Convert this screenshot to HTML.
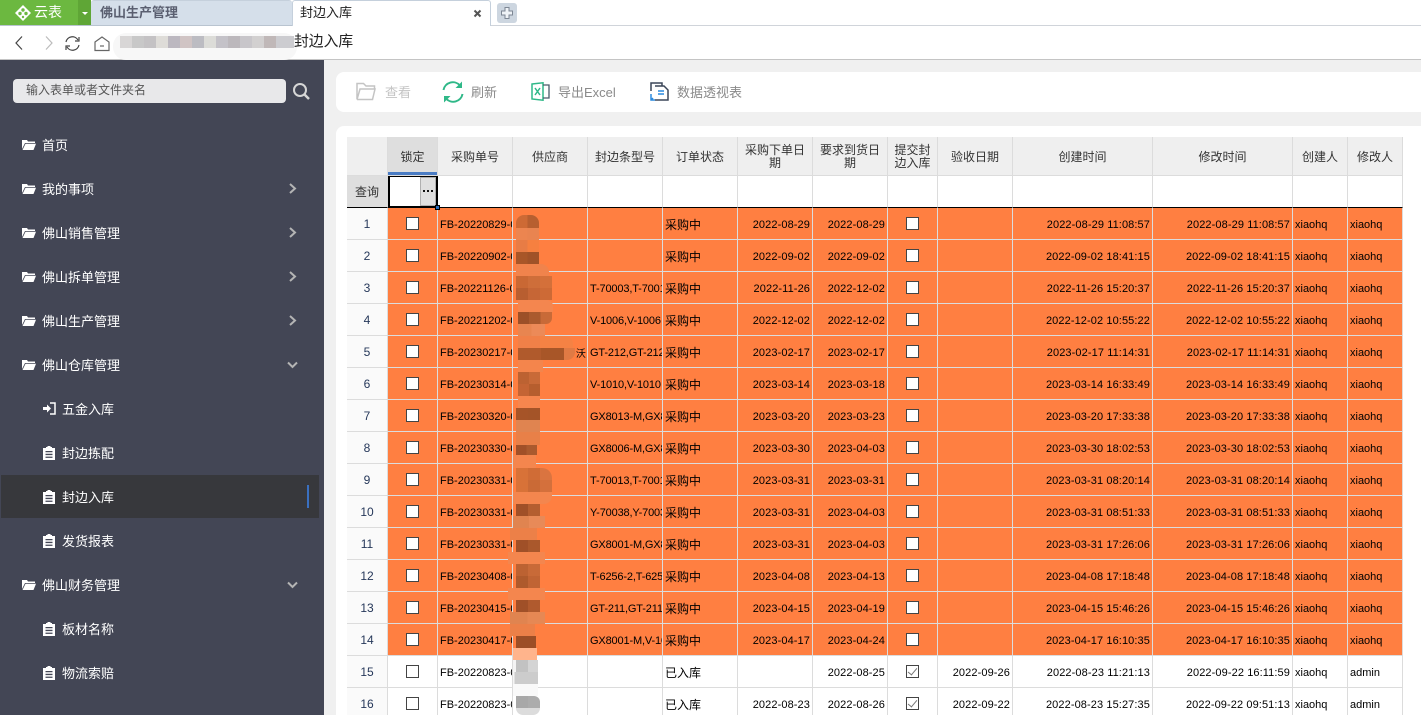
<!DOCTYPE html>
<html lang="zh">
<head>
<meta charset="utf-8">
<style>
*{box-sizing:border-box}
html,body{margin:0;padding:0;width:1421px;height:715px;overflow:hidden;background:#f0f0f0;font-family:"Liberation Sans","Noto Sans CJK SC",sans-serif}
#root{position:absolute;left:0;top:0;width:1421px;height:715px;overflow:hidden;background:#f0f0f0}
.a{position:absolute}
.n{white-space:nowrap}
#side{left:0;top:60px;width:324px;height:655px;background:#434655}
.m{position:absolute;left:42px;color:#fff;font-size:13px;line-height:18px;white-space:nowrap;margin-top:1px}
.s{position:absolute;left:62px;color:#fff;font-size:13px;line-height:18px;white-space:nowrap;margin-top:1px}
.fi{position:absolute;left:22px;width:14px;height:11px}
.ci{position:absolute;left:43px;width:12px;height:14px;margin-top:1px}
.ar{position:absolute;left:288px;width:9px;height:11px}
.t{color:#8a8a8a;font-size:13px;line-height:18px;position:absolute;white-space:nowrap;margin-top:1px}
table{position:absolute;left:347px;top:137px;width:1056px;border-collapse:separate;border-spacing:0;table-layout:fixed;font-size:11px;color:#000}
td,th{border-right:1px solid #dcdcdc;border-bottom:1px solid #dcdcdc;padding:2px 2px 0;overflow:hidden;white-space:nowrap;font-weight:normal}
tr{height:32px}
tr.u{height:39px}
th{height:39px;background:#efefef;color:#333;font-size:12px;text-align:center;line-height:13px;white-space:normal;padding:2px 7px 0}
th.x{padding:2px 0 0;white-space:nowrap}
tr.f td{height:32px;background:#fff;border-bottom:1px solid #000;padding:0}
tr.o td{background:#ff7f41;height:32px}
tr.w td{background:#fff;height:32px}
td.h{background:#fafafa!important;text-align:center;color:#26385a;font-size:12px;padding:0}
td.c{text-align:center;padding:2px 0 0}
td.r{text-align:right;letter-spacing:.1px}
td.z{font-size:12px}
td.g{letter-spacing:-.15px}
i.b{display:inline-block;width:13px;height:13px;border:1px solid #444;background:#fff;vertical-align:middle;margin-top:-2px;position:relative}
i.k:after{content:"";position:absolute;left:3px;top:0;width:4px;height:8px;border:solid #777;border-width:0 1.5px 1.5px 0;transform:rotate(40deg)}
.p{position:absolute}
</style>
</head>
<body>
<div id="root">
<!-- tab bar -->
<div class="a" style="left:0;top:0;width:1421px;height:26px;background:#fff"></div>
<div class="a" style="left:0;top:0;width:78px;height:26px;background:#6cb840"></div>
<div class="a" style="left:78px;top:0;width:13px;height:26px;background:#5fa636"></div>
<div class="a" style="left:82px;top:12px;width:0;height:0;border:3px solid transparent;border-top:3px solid #fff;border-bottom:0"></div>
<svg class="a" style="left:14px;top:4px" width="18" height="18" viewBox="0 0 18 18"><path d="M9 1L17 9L9 17L1 9Z" fill="#fff"/><circle cx="9" cy="6" r="1.7" fill="#6cb840"/><circle cx="6" cy="9.5" r="1.7" fill="#6cb840"/><circle cx="12" cy="9.5" r="1.7" fill="#6cb840"/><circle cx="9" cy="13" r="1.2" fill="#6cb840"/></svg>
<div class="a n" style="left:34px;top:3px;color:#fff;font-size:14px;line-height:19px">云表</div>
<div class="a" style="left:91px;top:0;width:201px;height:26px;background:#d5dfea;border-top:1px solid #c5d0dc;border-bottom:1px solid #b9c4d0;border-radius:3px 3px 0 0"></div>
<div class="a n" style="left:100px;top:3px;color:#5a5f70;font-size:13px;font-weight:bold;line-height:19px">佛山生产管理</div>
<div class="a" style="left:292px;top:0;width:199px;height:26px;background:#fff;border:1px solid #c5d0dc;border-bottom:0;border-radius:3px 3px 0 0"></div>
<div class="a n" style="left:300px;top:3px;color:#222;font-size:13px;line-height:19px">封边入库</div>
<svg class="a" style="left:473px;top:9px" width="9" height="9" viewBox="0 0 9 9"><path d="M1.5 1.5L7.5 7.5M7.5 1.5L1.5 7.5" stroke="#555" stroke-width="2"/></svg>
<div class="a" style="left:497px;top:3px;width:20px;height:20px;background:#cdd6e0;border-radius:3px"></div>
<svg class="a" style="left:501px;top:7px" width="12" height="12" viewBox="0 0 12 12"><path d="M4 .5H8V4H11.500V8H8V11.500H4V8H.5V4H4Z" fill="#eef2f6" stroke="#7d8794"/></svg>
<div class="a" style="left:491px;top:25px;width:930px;height:1px;background:#d0d4da"></div>
<div class="a" style="left:0;top:25px;width:292px;height:1px;background:#b9c4d0"></div>
<!-- address bar -->
<div class="a" style="left:0;top:26px;width:1421px;height:34px;background:#fff;border-bottom:1px solid #c4c4c4"></div>
<svg class="a" style="left:13px;top:34px" width="12" height="18" viewBox="0 0 12 18"><path d="M9 2.500L3 9L9 15.500" fill="none" stroke="#444" stroke-width="1.200"/></svg>
<svg class="a" style="left:43px;top:34px" width="12" height="18" viewBox="0 0 12 18"><path d="M3 2.500L9 9L3 15.500" fill="none" stroke="#bbb" stroke-width="1.200"/></svg>
<svg class="a" style="left:64px;top:35px" width="17" height="17" viewBox="0 0 17 17"><path d="M2 7A6.500 6.500 0 0 1 14 5M15 10A6.500 6.500 0 0 1 3 12" fill="none" stroke="#444" stroke-width="1.200"/><path d="M15 2V6H11M2 15V11H6" fill="none" stroke="#444" stroke-width="1.200"/></svg>
<svg class="a" style="left:94px;top:35px" width="17" height="17" viewBox="0 0 17 17"><path d="M1 7L8 2L15 7V15.500H1Z" fill="none" stroke="#666" stroke-width="1.200"/><path d="M6 11H10" stroke="#666" stroke-width="1.200"/></svg>
<div class="a" style="left:113px;top:33px;width:184px;height:27px;background:#f7f7f7;border-radius:13px"></div>
<div class="a" style="left:120px;top:36px;width:174px;height:12px;background:linear-gradient(90deg,#d8d6d6 0 12px,#c8c8c8 12px 24px,#c4c2c4 24px 36px,#dedcd8 36px 48px,#bcb8c0 48px 60px,#d0c4c4 60px 72px,#bcbcc2 72px 84px,#dcdcd8 84px 96px,#c4c2c8 96px 108px,#bcb8bc 108px 120px,#c8c6ca 120px 132px,#d2d0d0 132px 144px,#c0b8b8 144px 156px,#ccccd0 156px 174px)"></div>
<div class="a n" style="left:294px;top:32px;color:#222;font-size:14.800px;line-height:21px">封边入库</div>
<!-- sidebar -->
<div class="a" id="side"></div>
<div class="a" style="left:13px;top:79px;width:273px;height:24px;background:#e8e8ea;border-radius:4px"></div>
<div class="a n" style="left:26px;top:81px;color:#555;font-size:12px;line-height:18px">输入表单或者文件夹名</div>
<svg class="a" style="left:292px;top:82px" width="19" height="19" viewBox="0 0 19 19"><circle cx="8" cy="8" r="6" fill="none" stroke="#d6d6d6" stroke-width="2"/><path d="M12.500 12.500L17 17" stroke="#d6d6d6" stroke-width="2.500"/></svg>
<div class="a" style="left:1px;top:475px;width:318px;height:43px;background:#37383c"></div>
<div class="a" style="left:307px;top:485px;width:2px;height:23px;background:#3a70c0"></div>
<svg width="0" height="0" style="position:absolute"><defs>
<g id="fo"><path d="M0 1H5L6 2.500H13V4H3L0 10Z" fill="#fff"/><path d="M3.500 4.800H14L11.500 11H0.500Z" fill="#fff"/></g>
<g id="cl"><path d="M0 2H3V1H4.500V0H7.500V1H9V2H12V14H0Z" fill="#fff"/><path d="M2.500 5H9.500V6.300H2.500ZM2.500 7.800H9.500V9.100H2.500ZM2.500 10.600H9.500V11.900H2.500Z" fill="#434655"/></g>
<g id="ra"><path d="M2 1L7 5.500L2 10" fill="none" stroke="#b4b4b4" stroke-width="2"/></g>
</defs></svg>
<svg class="fi" style="top:139px" viewBox="0 0 14 11"><use href="#fo"/></svg><div class="m" style="top:136px">首页</div>
<svg class="fi" style="top:183px" viewBox="0 0 14 11"><use href="#fo"/></svg><div class="m" style="top:180px">我的事项</div><svg class="ar" style="top:183px" viewBox="0 0 9 11"><use href="#ra"/></svg>
<svg class="fi" style="top:227px" viewBox="0 0 14 11"><use href="#fo"/></svg><div class="m" style="top:224px">佛山销售管理</div><svg class="ar" style="top:227px" viewBox="0 0 9 11"><use href="#ra"/></svg>
<svg class="fi" style="top:271px" viewBox="0 0 14 11"><use href="#fo"/></svg><div class="m" style="top:268px">佛山拆单管理</div><svg class="ar" style="top:271px" viewBox="0 0 9 11"><use href="#ra"/></svg>
<svg class="fi" style="top:315px" viewBox="0 0 14 11"><use href="#fo"/></svg><div class="m" style="top:312px">佛山生产管理</div><svg class="ar" style="top:315px" viewBox="0 0 9 11"><use href="#ra"/></svg>
<svg class="fi" style="top:359px" viewBox="0 0 14 11"><use href="#fo"/></svg><div class="m" style="top:356px">佛山仓库管理</div>
<svg class="a" style="left:287px;top:361px" width="11" height="8" viewBox="0 0 11 8"><path d="M1 1.500L5.500 6L10 1.500" fill="none" stroke="#b4b4b4" stroke-width="2"/></svg>
<svg class="a" style="left:43px;top:402px" width="13" height="13" viewBox="0 0 13 13"><path d="M0 5H4V2.500L8 6.500L4 10.500V8H0Z" fill="#fff"/><path d="M7 1H12V12H7" fill="none" stroke="#fff" stroke-width="1.500"/></svg><div class="s" style="top:400px">五金入库</div>
<svg class="ci" style="top:445px" viewBox="0 0 12 14"><use href="#cl"/></svg><div class="s" style="top:444px">封边拣配</div>
<svg class="ci" style="top:489px" viewBox="0 0 12 14"><use href="#cl"/></svg><div class="s" style="top:488px">封边入库</div>
<svg class="ci" style="top:533px" viewBox="0 0 12 14"><use href="#cl"/></svg><div class="s" style="top:532px">发货报表</div>
<svg class="fi" style="top:579px" viewBox="0 0 14 11"><use href="#fo"/></svg><div class="m" style="top:576px">佛山财务管理</div>
<svg class="a" style="left:287px;top:581px" width="11" height="8" viewBox="0 0 11 8"><path d="M1 1.500L5.500 6L10 1.500" fill="none" stroke="#b4b4b4" stroke-width="2"/></svg>
<svg class="ci" style="top:621px" viewBox="0 0 12 14"><use href="#cl"/></svg><div class="s" style="top:620px">板材名称</div>
<svg class="ci" style="top:665px" viewBox="0 0 12 14"><use href="#cl"/></svg><div class="s" style="top:664px">物流索赔</div>
<!-- toolbar -->
<div class="a" style="left:336px;top:72px;width:1085px;height:40px;background:#fff;border-radius:8px 0 0 8px"></div>
<svg class="a" style="left:356px;top:82px" width="20" height="19" viewBox="0 0 20 19"><path d="M1 17.500V1.500H7.500L10 4H18.500V7M1 17.500H16.500L19 7H4L1 17.500" fill="none" stroke="#c4c4c4" stroke-width="1.500"/></svg>
<div class="t" style="left:385px;top:83px;color:#c4c4c4">查看</div>
<svg class="a" style="left:442px;top:81px" width="22" height="22" viewBox="0 0 22 22"><path d="M1.500 9A9.500 9.500 0 0 1 18 4.500M20.500 13A9.500 9.500 0 0 1 4 17.500" fill="none" stroke="#2fb888" stroke-width="2"/><path d="M20 0.500V7H13.500ZM2 21.500V15H8.500Z" fill="#2fb888"/></svg>
<div class="t" style="left:471px;top:83px">刷新</div>
<svg class="a" style="left:531px;top:82px" width="19" height="19" viewBox="0 0 19 19"><path d="M1 2L12 .8V18.200L1 17Z" fill="#fff" stroke="#2fb888" stroke-width="1.500"/><path d="M12 3H18V16H12" fill="none" stroke="#4a5a6a" stroke-width="1.300"/><path d="M4 6L9 13M9 6L4 13" stroke="#2fb888" stroke-width="1.500"/></svg>
<div class="t" style="left:558px;top:83px">导出Excel</div>
<svg class="a" style="left:650px;top:82px" width="19" height="20" viewBox="0 0 19 20"><path d="M1 9V1H12V4" fill="none" stroke="#3b4658" stroke-width="1.500"/><path d="M5 4H14L18 8V18H5" fill="#fff" stroke="#3b4658" stroke-width="1.500"/><path d="M8 9H14M8 12H14" stroke="#2a8adf" stroke-width="1.500"/><path d="M1 12V18H5M1 18L3 16" fill="none" stroke="#2a8adf" stroke-width="1.500"/></svg>
<div class="t" style="left:677px;top:83px">数据透视表</div>
<!-- table card -->
<div class="a" style="left:336px;top:126px;width:1085px;height:589px;background:#fff;border-radius:8px 0 0 0"></div>
<table>
<colgroup><col style="width:41px"><col style="width:50px"><col style="width:75px"><col style="width:75px"><col style="width:75px"><col style="width:75px"><col style="width:75px"><col style="width:75px"><col style="width:50px"><col style="width:75px"><col style="width:140px"><col style="width:140px"><col style="width:55px"><col style="width:55px"></colgroup>
<tr class="u"><th></th><th style="background:#dedede">锁定</th><th>采购单号</th><th>供应商</th><th>封边条型号</th><th>订单状态</th><th>采购下单日期</th><th>要求到货日期</th><th class="x">提交封<br>边入库</th><th>验收日期</th><th>创建时间</th><th>修改时间</th><th class="x">创建人</th><th class="x">修改人</th></tr>
<tr class="f"><td class="c" style="background:#dedede;font-size:12px;color:#333;padding:0">查询</td><td></td><td></td><td></td><td></td><td></td><td></td><td></td><td></td><td></td><td></td><td></td><td></td><td></td></tr>
<tr class="o"><td class="h">1</td><td class="c"><i class="b"></i></td><td>FB-20220829-0001</td><td></td><td class="g"></td><td class="z">采购中</td><td class="r">2022-08-29</td><td class="r">2022-08-29</td><td class="c"><i class="b"></i></td><td></td><td class="r">2022-08-29 11:08:57</td><td class="r">2022-08-29 11:08:57</td><td>xiaohq</td><td>xiaohq</td></tr>
<tr class="o"><td class="h">2</td><td class="c"><i class="b"></i></td><td>FB-20220902-0001</td><td></td><td class="g"></td><td class="z">采购中</td><td class="r">2022-09-02</td><td class="r">2022-09-02</td><td class="c"><i class="b"></i></td><td></td><td class="r">2022-09-02 18:41:15</td><td class="r">2022-09-02 18:41:15</td><td>xiaohq</td><td>xiaohq</td></tr>
<tr class="o"><td class="h">3</td><td class="c"><i class="b"></i></td><td>FB-20221126-0001</td><td></td><td class="g">T-70003,T-70013</td><td class="z">采购中</td><td class="r">2022-11-26</td><td class="r">2022-12-02</td><td class="c"><i class="b"></i></td><td></td><td class="r">2022-11-26 15:20:37</td><td class="r">2022-11-26 15:20:37</td><td>xiaohq</td><td>xiaohq</td></tr>
<tr class="o"><td class="h">4</td><td class="c"><i class="b"></i></td><td>FB-20221202-0001</td><td></td><td class="g">V-1006,V-1006</td><td class="z">采购中</td><td class="r">2022-12-02</td><td class="r">2022-12-02</td><td class="c"><i class="b"></i></td><td></td><td class="r">2022-12-02 10:55:22</td><td class="r">2022-12-02 10:55:22</td><td>xiaohq</td><td>xiaohq</td></tr>
<tr class="o"><td class="h">5</td><td class="c"><i class="b"></i></td><td>FB-20230217-0001</td><td class="r" style="padding-right:1px;font-size:10px">沃</td><td class="g">GT-212,GT-212</td><td class="z">采购中</td><td class="r">2023-02-17</td><td class="r">2023-02-17</td><td class="c"><i class="b"></i></td><td></td><td class="r">2023-02-17 11:14:31</td><td class="r">2023-02-17 11:14:31</td><td>xiaohq</td><td>xiaohq</td></tr>
<tr class="o"><td class="h">6</td><td class="c"><i class="b"></i></td><td>FB-20230314-0001</td><td></td><td class="g">V-1010,V-1010</td><td class="z">采购中</td><td class="r">2023-03-14</td><td class="r">2023-03-18</td><td class="c"><i class="b"></i></td><td></td><td class="r">2023-03-14 16:33:49</td><td class="r">2023-03-14 16:33:49</td><td>xiaohq</td><td>xiaohq</td></tr>
<tr class="o"><td class="h">7</td><td class="c"><i class="b"></i></td><td>FB-20230320-0001</td><td></td><td class="g">GX8013-M,GX8013</td><td class="z">采购中</td><td class="r">2023-03-20</td><td class="r">2023-03-23</td><td class="c"><i class="b"></i></td><td></td><td class="r">2023-03-20 17:33:38</td><td class="r">2023-03-20 17:33:38</td><td>xiaohq</td><td>xiaohq</td></tr>
<tr class="o"><td class="h">8</td><td class="c"><i class="b"></i></td><td>FB-20230330-0001</td><td></td><td class="g">GX8006-M,GX8006</td><td class="z">采购中</td><td class="r">2023-03-30</td><td class="r">2023-04-03</td><td class="c"><i class="b"></i></td><td></td><td class="r">2023-03-30 18:02:53</td><td class="r">2023-03-30 18:02:53</td><td>xiaohq</td><td>xiaohq</td></tr>
<tr class="o"><td class="h">9</td><td class="c"><i class="b"></i></td><td>FB-20230331-0001</td><td></td><td class="g">T-70013,T-70013</td><td class="z">采购中</td><td class="r">2023-03-31</td><td class="r">2023-03-31</td><td class="c"><i class="b"></i></td><td></td><td class="r">2023-03-31 08:20:14</td><td class="r">2023-03-31 08:20:14</td><td>xiaohq</td><td>xiaohq</td></tr>
<tr class="o"><td class="h">10</td><td class="c"><i class="b"></i></td><td>FB-20230331-0002</td><td></td><td class="g">Y-70038,Y-70038</td><td class="z">采购中</td><td class="r">2023-03-31</td><td class="r">2023-04-03</td><td class="c"><i class="b"></i></td><td></td><td class="r">2023-03-31 08:51:33</td><td class="r">2023-03-31 08:51:33</td><td>xiaohq</td><td>xiaohq</td></tr>
<tr class="o"><td class="h">11</td><td class="c"><i class="b"></i></td><td>FB-20230331-0003</td><td></td><td class="g">GX8001-M,GX8001</td><td class="z">采购中</td><td class="r">2023-03-31</td><td class="r">2023-04-03</td><td class="c"><i class="b"></i></td><td></td><td class="r">2023-03-31 17:26:06</td><td class="r">2023-03-31 17:26:06</td><td>xiaohq</td><td>xiaohq</td></tr>
<tr class="o"><td class="h">12</td><td class="c"><i class="b"></i></td><td>FB-20230408-0001</td><td></td><td class="g">T-6256-2,T-6256</td><td class="z">采购中</td><td class="r">2023-04-08</td><td class="r">2023-04-13</td><td class="c"><i class="b"></i></td><td></td><td class="r">2023-04-08 17:18:48</td><td class="r">2023-04-08 17:18:48</td><td>xiaohq</td><td>xiaohq</td></tr>
<tr class="o"><td class="h">13</td><td class="c"><i class="b"></i></td><td>FB-20230415-0001</td><td></td><td class="g">GT-211,GT-211</td><td class="z">采购中</td><td class="r">2023-04-15</td><td class="r">2023-04-19</td><td class="c"><i class="b"></i></td><td></td><td class="r">2023-04-15 15:46:26</td><td class="r">2023-04-15 15:46:26</td><td>xiaohq</td><td>xiaohq</td></tr>
<tr class="o"><td class="h">14</td><td class="c"><i class="b"></i></td><td>FB-20230417-0001</td><td></td><td class="g">GX8001-M,V-1006</td><td class="z">采购中</td><td class="r">2023-04-17</td><td class="r">2023-04-24</td><td class="c"><i class="b"></i></td><td></td><td class="r">2023-04-17 16:10:35</td><td class="r">2023-04-17 16:10:35</td><td>xiaohq</td><td>xiaohq</td></tr>
<tr class="w"><td class="h">15</td><td class="c"><i class="b"></i></td><td>FB-20220823-0001</td><td></td><td></td><td class="z">已入库</td><td class="r"></td><td class="r">2022-08-25</td><td class="c"><i class="b k"></i></td><td class="r">2022-09-26</td><td class="r">2022-08-23 11:21:13</td><td class="r">2022-09-22 16:11:59</td><td>xiaohq</td><td>admin</td></tr>
<tr class="w"><td class="h">16</td><td class="c"><i class="b"></i></td><td>FB-20220823-0002</td><td></td><td></td><td class="z">已入库</td><td class="r">2022-08-23</td><td class="r">2022-08-26</td><td class="c"><i class="b k"></i></td><td class="r">2022-09-22</td><td class="r">2022-08-23 15:27:35</td><td class="r">2022-09-22 09:51:13</td><td>xiaohq</td><td>admin</td></tr>
</table>
<!-- selection decorations -->
<div class="a" style="left:388px;top:172px;width:49px;height:3px;background:#4a7cc4"></div>
<div class="a" style="left:388px;top:176px;width:50px;height:32px;border:2px solid #000;border-top:1px solid #000;background:#fff"></div>
<div class="a" style="left:420px;top:177px;width:16px;height:29px;background:#e0e0e0;border:1px solid #b0b0b0"></div>
<div class="a" style="left:423px;top:190px;width:2px;height:2px;background:#111;box-shadow:4px 0 #111,8px 0 #111"></div>
<div class="a" style="left:435px;top:205px;width:5px;height:5px;background:#2a6bb8;border:1px solid #000"></div>
<!-- mosaic -->
<div class="p" style="left:516px;top:215px;width:23px;height:13px;border-radius:8px 8px 0 0;background:linear-gradient(90deg,#cd6a35 50%,#b75f30 50%)"></div>
<div class="p" style="left:516px;top:228px;width:23px;height:12px;background:linear-gradient(90deg,#ec8550 50%,#e98450 50%)"></div>
<div class="p" style="left:516px;top:240px;width:23px;height:12px;background:linear-gradient(90deg,#e87c45 50%,#f68040 50%)"></div>
<div class="p" style="left:516px;top:252px;width:23px;height:12px;background:linear-gradient(90deg,#a85628 50%,#a05228 50%)"></div>
<div class="p" style="left:516px;top:264px;width:33px;height:12px;background:#f0834c;border-radius:0 8px 0 0"></div>
<div class="p" style="left:516px;top:276px;width:36px;height:12px;background:linear-gradient(90deg,#c96834 33%,#ce6e3a 33% 66%,#d4703a 66%)"></div>
<div class="p" style="left:516px;top:288px;width:36px;height:12px;background:linear-gradient(90deg,#b85e30 33%,#c66636 33% 66%,#cd6a36 66%)"></div>
<div class="p" style="left:518px;top:300px;width:35px;height:12px;background:#f4864f;border-radius:0 6px 0 0"></div>
<div class="p" style="left:518px;top:312px;width:34px;height:12px;background:linear-gradient(90deg,#9c5028 33%,#aa5a2e 33% 66%,#c86a38 66%);border-radius:0 0 6px 0"></div>
<div class="p" style="left:518px;top:324px;width:27px;height:12px;background:linear-gradient(90deg,#e88550 50%,#ec8a58 50%)"></div>
<div class="p" style="left:518px;top:336px;width:55px;height:12px;background:linear-gradient(90deg,#f08048 40%,#f58244 40%);border-radius:0 8px 0 0"></div>
<div class="p" style="left:518px;top:348px;width:46px;height:12px;background:linear-gradient(90deg,#b05a2c 50%,#a85628 50%)"></div>
<div class="p" style="left:564px;top:348px;width:11px;height:12px;background:#e07a44;border-radius:0 0 8px 0"></div>
<div class="p" style="left:518px;top:360px;width:25px;height:12px;background:#f4854c"></div>
<div class="p" style="left:518px;top:372px;width:22px;height:12px;background:linear-gradient(90deg,#bc6232 50%,#c86a38 50%)"></div>
<div class="p" style="left:518px;top:384px;width:22px;height:12px;background:linear-gradient(90deg,#c46434 50%,#b65e2e 50%)"></div>
<div class="p" style="left:518px;top:396px;width:22px;height:12px;background:#f6864e"></div>
<div class="p" style="left:516px;top:408px;width:24px;height:12px;background:linear-gradient(90deg,#a65428 50%,#a45428 50%)"></div>
<div class="p" style="left:516px;top:420px;width:24px;height:12px;background:#e08450"></div>
<div class="p" style="left:516px;top:432px;width:24px;height:13px;background:#e88048"></div>
<div class="p" style="left:516px;top:445px;width:21px;height:10px;background:linear-gradient(90deg,#a05028 50%,#aa5a2e 50%)"></div>
<div class="p" style="left:513px;top:455px;width:23px;height:13px;background:#f4864e"></div>
<div class="p" style="left:516px;top:468px;width:36px;height:12px;border-radius:0 10px 0 0;background:linear-gradient(90deg,#d87238 33%,#d06c36 33% 66%,#da7440 66%)"></div>
<div class="p" style="left:516px;top:480px;width:36px;height:12px;background:linear-gradient(90deg,#d87238 33%,#ca6a36 33% 66%,#d4703c 66%)"></div>
<div class="p" style="left:513px;top:492px;width:39px;height:12px;background:#f4864e;border-radius:0 0 8px 0"></div>
<div class="p" style="left:516px;top:504px;width:24px;height:12px;background:linear-gradient(90deg,#a05028 50%,#b45e30 50%)"></div>
<div class="p" style="left:513px;top:516px;width:32px;height:12px;background:linear-gradient(90deg,#e08450 50%,#e88a58 50%)"></div>
<div class="p" style="left:510px;top:528px;width:27px;height:12px;background:#ec8048"></div>
<div class="p" style="left:516px;top:540px;width:24px;height:12px;background:linear-gradient(90deg,#a05028 50%,#aa582c 50%)"></div>
<div class="p" style="left:508px;top:552px;width:37px;height:12px;background:#f4864e"></div>
<div class="p" style="left:516px;top:564px;width:24px;height:12px;background:linear-gradient(90deg,#bc6232 50%,#c86a38 50%)"></div>
<div class="p" style="left:516px;top:576px;width:24px;height:12px;background:linear-gradient(90deg,#ae5a2c 50%,#c06434 50%)"></div>
<div class="p" style="left:508px;top:588px;width:37px;height:12px;background:#f4864e"></div>
<div class="p" style="left:516px;top:600px;width:24px;height:12px;background:linear-gradient(90deg,#a05028 50%,#b05a2e 50%)"></div>
<div class="p" style="left:510px;top:612px;width:35px;height:12px;background:linear-gradient(90deg,#e08450 50%,#e68854 50%)"></div>
<div class="p" style="left:510px;top:624px;width:25px;height:12px;background:#ec8048"></div>
<div class="p" style="left:516px;top:636px;width:20px;height:12px;background:#9c4e26"></div>
<div class="p" style="left:513px;top:648px;width:24px;height:12px;background:#ffb48c"></div>
<div class="p" style="left:513px;top:660px;width:25px;height:12px;background:linear-gradient(90deg,#f4f4f4 12%,#c2c2c2 12% 60%,#d4d4d4 60%)"></div>
<div class="p" style="left:513px;top:672px;width:25px;height:12px;background:linear-gradient(90deg,#f4f4f4 6%,#cccccc 6%)"></div>
<div class="p" style="left:513px;top:684px;width:25px;height:12px;background:#f9f9f9"></div>
<div class="p" style="left:516px;top:696px;width:24px;height:12px;border-radius:0 6px 0 0;background:linear-gradient(90deg,#a8a8a8 50%,#acacac 50%)"></div>
<div class="p" style="left:516px;top:708px;width:24px;height:7px;border-radius:0 0 8px 8px;background:#dcdcdc"></div>
</div>
</body>
</html>
